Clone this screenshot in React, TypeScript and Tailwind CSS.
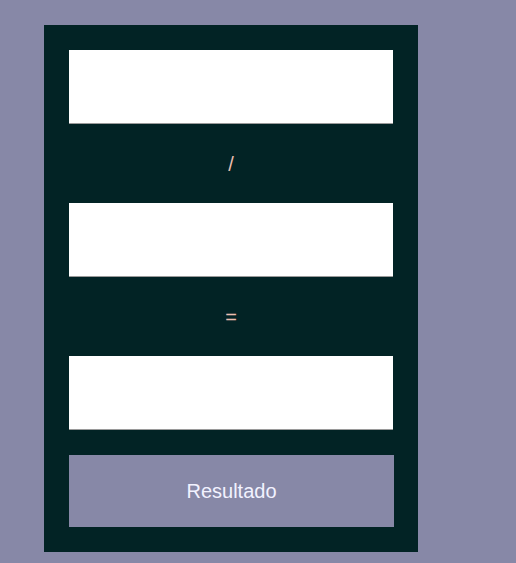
import React from 'react';

const Campo = () => (
  <input type="text" className="block w-[324px] h-[74px] bg-white border-0 border-b border-[#9a9a9a] outline-none" />
);

const Simbolo = ({ s }: { s: string }) => (
  <div className="h-[79px] flex items-center justify-center text-[20px] text-[#eabfb0]" style={{ fontFamily: '"Liberation Sans", Arial, sans-serif' }}>
    {s}
  </div>
);

export default function App() {
  return (
    <div className="min-h-[563px] w-full bg-[#8788a7] pt-[25px] pl-[44px]" style={{ fontFamily: '"Liberation Sans", Arial, sans-serif' }}>
      <div className="w-[374px] h-[527px] bg-[#022325] p-[25px]">
        <Campo />
        <Simbolo s="/" />
        <Campo />
        <Simbolo s="=" />
        <Campo />
        <button className="mt-[25px] w-[325px] h-[72px] bg-[#8788a7] text-[#f2f2ff] text-[20px]">
          Resultado
        </button>
      </div>
    </div>
  );
}
